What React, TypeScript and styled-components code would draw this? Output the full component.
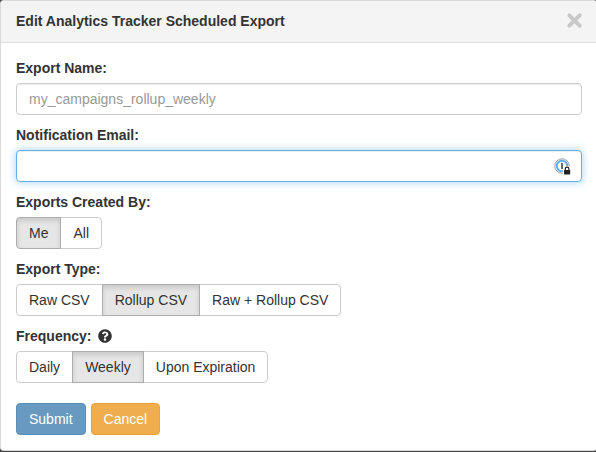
import React, { useState } from "react";
import styled, { createGlobalStyle, css } from "styled-components";
import { FaQuestionCircle } from "react-icons/fa";

const GlobalStyle = createGlobalStyle`
  *, *::before, *::after { box-sizing: border-box; }
  html { height: 100%; overflow: hidden; }
  body {
    margin: 0;
    background: #444;
    color: #333;
    font: 14px/20px "Liberation Sans", Helvetica, Arial, sans-serif;
  }
  button, input { font: inherit; color: inherit; }
`;

const Panel = styled.section`
  background: #fff;
  border: 1px solid #d9d9d9;
  border-right: 0;
  border-radius: 4px 2px 2px 4px;
  overflow: hidden;
`;

const PanelHeader = styled.header`
  display: flex;
  align-items: center;
  justify-content: space-between;
  height: 42px;
  padding: 0 14px 2px 15px;
  background: #f4f4f4;
  border-bottom: 1px solid #ddd;
`;

const Title = styled.h1`
  margin: 0;
  font-size: 14px;
  font-weight: bold;
`;

const CloseButton = styled.button`
  display: flex;
  padding: 0;
  border: 0;
  background: none;
  color: #c8c8c8;
  cursor: pointer;
`;

const Form = styled.form`
  padding: 15px 14px 15px 15px;
`;

const labelStyle = css`
  display: flex;
  align-items: center;
  gap: 7px;
  margin: 0 0 5px;
  padding: 0;
  font-weight: bold;
`;

const Field = styled.div`
  margin-bottom: 10px;
`;

const Label = styled.label`
  ${labelStyle}
`;

const GroupLabel = styled.div`
  ${labelStyle}
`;

const InputFrame = styled.div<{ $active?: boolean }>`
  display: flex;
  align-items: center;
  height: 32px;
  padding: 0 10px 0 12px;
  background: #fff;
  border: 1px solid ${(p) => (p.$active ? "#66afe9" : "#ccc")};
  border-radius: 4px;
  box-shadow: inset 0 1px 1px rgba(0, 0, 0, 0.075)
    ${(p) => p.$active && ", 0 0 8px rgba(102, 175, 233, 0.6)"};
`;

const TextInput = styled.input`
  flex: 1;
  min-width: 0;
  padding: 0;
  border: 0;
  outline: 0;
  background: transparent;
  &::placeholder { color: #999; opacity: 1; }
`;

const ButtonGroup = styled.div`
  display: flex;
`;

const OptionButton = styled.button<{ $active: boolean }>`
  position: relative;
  z-index: ${(p) => (p.$active ? 1 : 0)};
  height: 32px;
  padding: 0 12px;
  border: 1px solid ${(p) => (p.$active ? "#adadad" : "#ccc")};
  background: ${(p) => (p.$active ? "#e6e6e6" : "#fff")};
  box-shadow: ${(p) => (p.$active ? "inset 0 3px 5px rgba(0, 0, 0, 0.125)" : "none")};
  white-space: nowrap;
  cursor: pointer;
  & + & { margin-left: -1px; }
  &:first-child { border-radius: 4px 0 0 4px; }
  &:last-child { border-radius: 0 4px 4px 0; }
`;

const Actions = styled.div`
  display: flex;
  gap: 5px;
  margin-top: 20px;
`;

const ActionButton = styled.button<{ $tone: "primary" | "warning" }>`
  height: 32px;
  padding: 0 12px;
  border: 1px solid ${(p) => (p.$tone === "primary" ? "#5b8fb8" : "#eea236")};
  border-radius: 4px;
  background: ${(p) => (p.$tone === "primary" ? "#6899c0" : "#f0ad4e")};
  color: #fff;
  cursor: pointer;
`;

function CloseIcon() {
  return (
    <svg width="15" height="15" viewBox="0 0 14 14" aria-hidden="true">
      <path d="M2.2 2.2 11.8 11.8M11.8 2.2 2.2 11.8" stroke="currentColor" strokeWidth="3.6" strokeLinecap="round" />
    </svg>
  );
}

function PasswordManagerIcon() {
  return (
    <svg width="17" height="17" viewBox="0 0 17 17" fill="none" aria-hidden="true">
      <circle cx="8" cy="8" r="7.2" fill="#fff" stroke="#9a9ca0" />
      <circle cx="8" cy="8" r="5.2" stroke="#62aefa" strokeWidth="2" />
      <path d="M8 5v6" stroke="#55585c" strokeWidth="1.8" />
      <path d="M8.8 17V11.2L10.4 8h4L17 9.5V17Z" fill="#fff" />
      <path d="M11.3 12.2V11a1.8 1.8 0 0 1 3.6 0v1.2" stroke="#222" strokeWidth="1.2" />
      <rect x="10" y="12" width="6.2" height="4.4" rx="0.6" fill="#222" />
    </svg>
  );
}

interface OptionFieldProps {
  id: string;
  label: string;
  options: string[];
  initial: string;
  help?: boolean;
}

function OptionField({ id, label, options, initial, help }: OptionFieldProps) {
  const [selected, setSelected] = useState(initial);
  return (
    <Field>
      <GroupLabel>
        <span id={id}>{label}</span>
        {help && <FaQuestionCircle size={14} aria-hidden="true" />}
      </GroupLabel>
      <ButtonGroup role="group" aria-labelledby={id}>
        {options.map((option) => (
          <OptionButton
            key={option}
            type="button"
            $active={option === selected}
            aria-pressed={option === selected}
            onClick={() => setSelected(option)}
          >
            {option}
          </OptionButton>
        ))}
      </ButtonGroup>
    </Field>
  );
}

export default function App() {
  return (
    <>
      <GlobalStyle />
      <Panel role="dialog" aria-labelledby="dialog-title">
        <PanelHeader>
          <Title id="dialog-title">Edit Analytics Tracker Scheduled Export</Title>
          <CloseButton type="button" aria-label="Close">
            <CloseIcon />
          </CloseButton>
        </PanelHeader>
        <Form onSubmit={(event) => event.preventDefault()}>
          <Field>
            <Label htmlFor="export-name">Export Name:</Label>
            <InputFrame>
              <TextInput id="export-name" type="text" placeholder="my_campaigns_rollup_weekly" />
            </InputFrame>
          </Field>
          <Field>
            <Label htmlFor="notification-email">Notification Email:</Label>
            <InputFrame $active>
              <TextInput id="notification-email" type="email" />
              <PasswordManagerIcon />
            </InputFrame>
          </Field>
          <OptionField id="created-by" label="Exports Created By:" options={["Me", "All"]} initial="Me" />
          <OptionField
            id="export-type"
            label="Export Type:"
            options={["Raw CSV", "Rollup CSV", "Raw + Rollup CSV"]}
            initial="Rollup CSV"
          />
          <OptionField
            id="frequency"
            label="Frequency:"
            options={["Daily", "Weekly", "Upon Expiration"]}
            initial="Weekly"
            help
          />
          <Actions>
            <ActionButton type="submit" $tone="primary">Submit</ActionButton>
            <ActionButton type="button" $tone="warning">Cancel</ActionButton>
          </Actions>
        </Form>
      </Panel>
    </>
  );
}
